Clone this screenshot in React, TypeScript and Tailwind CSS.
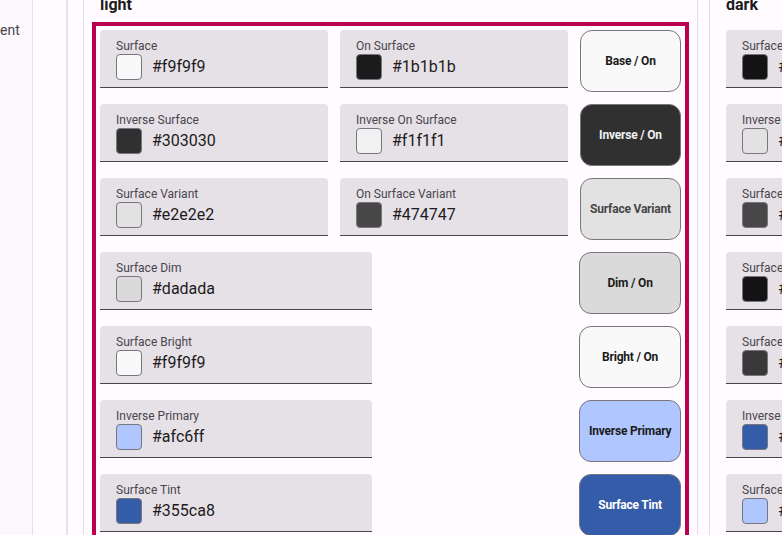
import React from "react";

type Tok = { label: string; hex: string };
type Row = { cards: Tok[]; preview: { text: string; bg: string; fg: string } };

const lightRows: Row[] = [
  { cards: [{ label: "Surface", hex: "#f9f9f9" }, { label: "On Surface", hex: "#1b1b1b" }], preview: { text: "Base / On", bg: "#f9f9f9", fg: "#1b1b1b" } },
  { cards: [{ label: "Inverse Surface", hex: "#303030" }, { label: "Inverse On Surface", hex: "#f1f1f1" }], preview: { text: "Inverse / On", bg: "#303030", fg: "#f1f1f1" } },
  { cards: [{ label: "Surface Variant", hex: "#e2e2e2" }, { label: "On Surface Variant", hex: "#474747" }], preview: { text: "Surface Variant", bg: "#e2e2e2", fg: "#474747" } },
  { cards: [{ label: "Surface Dim", hex: "#dadada" }], preview: { text: "Dim / On", bg: "#dadada", fg: "#1b1b1b" } },
  { cards: [{ label: "Surface Bright", hex: "#f9f9f9" }], preview: { text: "Bright / On", bg: "#f9f9f9", fg: "#1b1b1b" } },
  { cards: [{ label: "Inverse Primary", hex: "#afc6ff" }], preview: { text: "Inverse Primary", bg: "#afc6ff", fg: "#1b1b1b" } },
  { cards: [{ label: "Surface Tint", hex: "#355ca8" }], preview: { text: "Surface Tint", bg: "#355ca8", fg: "#ffffff" } },
];

const darkRows: Row[] = [
  { cards: [{ label: "Surface", hex: "#131313" }, { label: "On Surface", hex: "#e2e2e2" }], preview: { text: "Base / On", bg: "#131313", fg: "#e2e2e2" } },
  { cards: [{ label: "Inverse Surface", hex: "#e2e2e2" }, { label: "Inverse On Surface", hex: "#303030" }], preview: { text: "Inverse / On", bg: "#e2e2e2", fg: "#303030" } },
  { cards: [{ label: "Surface Variant", hex: "#474747" }, { label: "On Surface Variant", hex: "#c6c6c6" }], preview: { text: "Surface Variant", bg: "#474747", fg: "#c6c6c6" } },
  { cards: [{ label: "Surface Dim", hex: "#131313" }], preview: { text: "Dim / On", bg: "#131313", fg: "#e2e2e2" } },
  { cards: [{ label: "Surface Bright", hex: "#393939" }], preview: { text: "Bright / On", bg: "#393939", fg: "#e2e2e2" } },
  { cards: [{ label: "Inverse Primary", hex: "#355ca8" }], preview: { text: "Inverse Primary", bg: "#355ca8", fg: "#ffffff" } },
  { cards: [{ label: "Surface Tint", hex: "#afc6ff" }], preview: { text: "Surface Tint", bg: "#afc6ff", fg: "#1b1b1b" } },
];

function Card({ t, wide }: { t: Tok; wide: boolean }) {
  return (
    <div
      className={`${wide ? "w-[272px]" : "w-[228px]"} h-[58px] shrink-0 bg-[#e6e1e6] rounded-t-[4px] border-b border-[#49454f] pl-[16px] pt-[8px]`}
    >
      <div className="text-[12px] leading-[16px] text-[#49454f]">{t.label}</div>
      <div className="flex items-center gap-[10px]">
        <div className="w-[26px] h-[26px] rounded-[4px] border border-[#79747e]" style={{ backgroundColor: t.hex }} />
        <div className="text-[16px] leading-[20px] text-[#1d1b20]">{t.hex}</div>
      </div>
    </div>
  );
}

function Panel({ title, rows, selected }: { title: string; rows: Row[]; selected: boolean }) {
  return (
    <div className="w-[615px] shrink-0 border-x border-[#e2dde2] bg-[#fffbff] px-[16px]">
      <div className="-mt-[5px] h-[20px] text-[16px] leading-[20px] font-bold text-[#1d1b20]">{title}</div>
      <div
        className={`mt-[15px] flex flex-col gap-[12px] ${selected ? "outline-[4px] outline-solid outline-offset-[4px] outline-[#b8004e]" : ""}`}
      >
        {rows.map((r, i) => (
          <div key={i} className="flex items-start">
            <div className="w-[468px] flex gap-[12px]">
              {r.cards.map((c) => (
                <Card key={c.label} t={c} wide={r.cards.length === 1} />
              ))}
            </div>
            <div
              className="ml-[12px] w-[102px] h-[62px] rounded-[12px] border border-[#79747e] flex items-center justify-center text-[12px] font-bold text-center leading-[16px] tracking-[-0.2px]"
              style={{ backgroundColor: r.preview.bg, color: r.preview.fg }}
            >
              {r.preview.text}
            </div>
          </div>
        ))}
      </div>
    </div>
  );
}

export default function App() {
  return (
    <div className="w-[782px] h-[535px] overflow-hidden flex bg-[#fdf8fd]" style={{ fontFamily: "Roboto, 'Noto Sans', sans-serif" }}>
      <div className="w-[33px] shrink-0 border-r border-[#e6e1e6] pt-[20px]">
        <div className="text-[14px] leading-[20px] text-[#49454f]">ent</div>
      </div>
      <div className="w-[35px] shrink-0 border-r-2 border-[#e6e1e6] bg-[#fffbff]" />
      <div className="flex gap-[11px] pl-[15px] bg-[#fffbff]">
        <Panel title="light" rows={lightRows} selected={true} />
        <Panel title="dark" rows={darkRows} selected={false} />
      </div>
    </div>
  );
}
